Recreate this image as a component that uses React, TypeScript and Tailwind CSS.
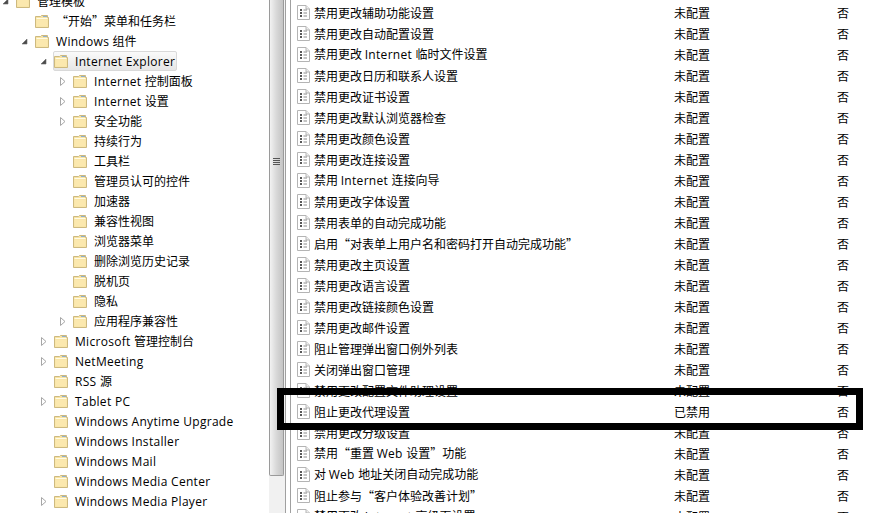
import React from 'react';

const cjk = "font-['Noto_Sans_CJK_SC',sans-serif]";

type TreeRow = { label: string; indent: number; arrow?: 'open' | 'closed'; selected?: boolean };

const treeRows: TreeRow[] = [
  { label: '管理模板', indent: 0, arrow: 'open' },
  { label: '“开始”菜单和任务栏', indent: 1 },
  { label: 'Windows 组件', indent: 1, arrow: 'open' },
  { label: 'Internet Explorer', indent: 2, arrow: 'open', selected: true },
  { label: 'Internet 控制面板', indent: 3, arrow: 'closed' },
  { label: 'Internet 设置', indent: 3, arrow: 'closed' },
  { label: '安全功能', indent: 3, arrow: 'closed' },
  { label: '持续行为', indent: 3 },
  { label: '工具栏', indent: 3 },
  { label: '管理员认可的控件', indent: 3 },
  { label: '加速器', indent: 3 },
  { label: '兼容性视图', indent: 3 },
  { label: '浏览器菜单', indent: 3 },
  { label: '删除浏览历史记录', indent: 3 },
  { label: '脱机页', indent: 3 },
  { label: '隐私', indent: 3 },
  { label: '应用程序兼容性', indent: 3, arrow: 'closed' },
  { label: 'Microsoft 管理控制台', indent: 2, arrow: 'closed' },
  { label: 'NetMeeting', indent: 2, arrow: 'closed' },
  { label: 'RSS 源', indent: 2 },
  { label: 'Tablet PC', indent: 2, arrow: 'closed' },
  { label: 'Windows Anytime Upgrade', indent: 2 },
  { label: 'Windows Installer', indent: 2 },
  { label: 'Windows Mail', indent: 2 },
  { label: 'Windows Media Center', indent: 2 },
  { label: 'Windows Media Player', indent: 2, arrow: 'closed' },
];

const policies = [
  '禁用更改辅助功能设置',
  '禁用更改自动配置设置',
  '禁用更改 Internet 临时文件设置',
  '禁用更改日历和联系人设置',
  '禁用更改证书设置',
  '禁用更改默认浏览器检查',
  '禁用更改颜色设置',
  '禁用更改连接设置',
  '禁用 Internet 连接向导',
  '禁用更改字体设置',
  '禁用表单的自动完成功能',
  '启用“对表单上用户名和密码打开自动完成功能”',
  '禁用更改主页设置',
  '禁用更改语言设置',
  '禁用更改链接颜色设置',
  '禁用更改邮件设置',
  '阻止管理弹出窗口例外列表',
  '关闭弹出窗口管理',
  '禁用更改配置文件助理设置',
  '阻止更改代理设置',
  '禁用更改分级设置',
  '禁用“重置 Web 设置”功能',
  '对 Web 地址关闭自动完成功能',
  '阻止参与“客户体验改善计划”',
  '禁用更改 Internet 高级页设置',
];

// 拉丁文字单独包一层，字宽才接近原图
function Label({ text }: { text: string }) {
  const parts = text.split(/([A-Za-z][A-Za-z ]*)/).filter(Boolean);
  return (
    <span className="whitespace-pre">
      {parts.map((part, i) =>
        /[A-Za-z]/.test(part) ? (
          <span key={i} className="font-['Open_Sans',sans-serif] tracking-[0.3px]">
            {part}
          </span>
        ) : (
          <span key={i}>{part}</span>
        ),
      )}
    </span>
  );
}

function Folder() {
  return (
    <svg width="14" height="13" viewBox="0 0 14 13" className="shrink-0">
      <path d="M0.5 1.5 H5.5 L6.5 0.5 H12.5 V2.5 H13.5 V12.5 H0.5 Z" fill="#f7e3a4" stroke="#cdb97f" />
      <path d="M1.5 3.5 H12.5" stroke="#fffbe6" />
      <path d="M1.5 4.5 H12.5 V11.5 H1.5 Z" fill="#fbe8ae" />
      <path d="M8 1.5 H12" stroke="#8fb0cc" />
    </svg>
  );
}

function Arrow({ kind }: { kind?: 'open' | 'closed' }) {
  if (kind === 'open') {
    return (
      <svg width="7" height="7" viewBox="0 0 7 7" className="ml-[-1px] shrink-0">
        <path d="M6 1 V6 H1 Z" fill="#4a4a4a" stroke="#6a6a6a" strokeWidth="0.6" />
      </svg>
    );
  }
  if (kind === 'closed') {
    return (
      <svg width="6" height="9" viewBox="0 0 6 9" className="shrink-0">
        <path d="M0.5 0.5 L5 4.5 L0.5 8.5 Z" fill="#fff" stroke="#a6a6a6" />
      </svg>
    );
  }
  return null;
}

function PolicyIcon() {
  return (
    <svg width="13" height="15" viewBox="0 0 13 15" className="shrink-0">
      <path d="M0.5 0.5 H9 L12.5 4 V14.5 H0.5 Z" fill="#fff" stroke="#b4b4b4" />
      <path d="M9 0.5 V4 H12.5" fill="#eee" stroke="#b4b4b4" />
      <path d="M3 5 H5 M3 8 H5 M3 11 H5" stroke="#222" strokeWidth="1.4" />
      <path d="M6.5 5 H10 M6.5 8 H10 M6.5 11 H10" stroke="#8a8a8a" />
    </svg>
  );
}

const indents = ['pl-[3px]', 'pl-[22px]', 'pl-[41px]', 'pl-[60px]'];

function Tree() {
  return (
    <div className="-mt-[9px] w-[269px] shrink-0">
      {treeRows.map((row) => (
        <div key={row.label} className={`flex h-5 items-center ${indents[row.indent]}`}>
          <span className="flex w-[13px] shrink-0">
            <Arrow kind={row.arrow} />
          </span>
          <div
            className={
              row.selected
                ? '-ml-[1px] flex h-[20px] items-center gap-[7px] rounded-[2px] border border-[#d9d9d9] bg-gradient-to-b from-[#fafafa] to-[#e6e6e6] pr-[1px]'
                : 'flex h-[20px] items-center gap-[7px]'
            }
          >
            <Folder />
            <Label text={row.label} />
          </div>
        </div>
      ))}
    </div>
  );
}

function Scrollbar() {
  return (
    <div className="h-full w-[16px] shrink-0 bg-[#f1f1f1]">
      <div className="flex h-[476px] w-[15px] items-center justify-center rounded-b-[2px] border border-t-0 border-[#9a9a9a] bg-gradient-to-r from-[#f2f2f2] via-[#d8d8d8] to-[#c4c4c4]">
        <div className="mt-[-152px] flex flex-col gap-[1px]">
          <span className="h-px w-[7px] bg-[#555]" />
          <span className="h-px w-[7px] bg-[#555]" />
          <span className="h-px w-[7px] bg-[#555]" />
          <span className="h-px w-[7px] bg-[#555]" />
        </div>
      </div>
    </div>
  );
}

function PolicyList() {
  return (
    <div className="flex-1 pt-[2px]">
      {policies.map((name, i) => (
        <div key={name} className="flex h-[21px] items-center pl-[6px]">
          <span className="flex w-[17px] shrink-0">
            <PolicyIcon />
          </span>
          <span className="w-[360px] shrink-0">
            <Label text={name} />
          </span>
          <span className="w-[163px] shrink-0">{i === 19 ? '已禁用' : '未配置'}</span>
          <span>否</span>
        </div>
      ))}
    </div>
  );
}

export default function App() {
  return (
    <div className={`relative flex h-[513px] w-[880px] overflow-hidden bg-white text-xs text-black ${cjk}`}>
      <Tree />
      <Scrollbar />
      <div className="h-full w-px shrink-0 bg-[#a0a0a0]" />
      <div className="ml-[4px] h-full w-px shrink-0 bg-[#a0a0a0]" />
      <PolicyList />
      {/* 标注框 */}
      <div className="pointer-events-none absolute top-[388px] left-[277px] h-[42px] w-[586px] border-[7px] border-black" />
    </div>
  );
}
